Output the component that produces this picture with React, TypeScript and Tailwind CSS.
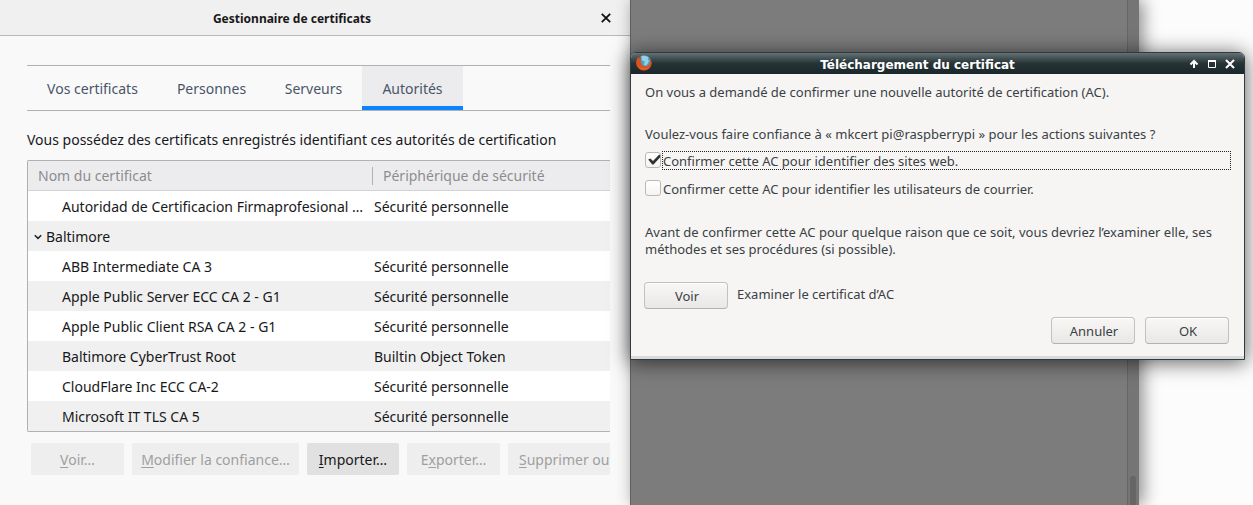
import { useState } from 'react';
import type { ReactNode } from 'react';

const tabs = [
  { label: 'Vos certificats', width: 'w-[131px]' },
  { label: 'Personnes', width: 'w-[107px]' },
  { label: 'Serveurs', width: 'w-[97px]' },
  { label: 'Autorités', width: 'w-[101px]' },
];

const certificates = [
  { name: 'Autoridad de Certificacion Firmaprofesional …', device: 'Sécurité personnelle' },
  { name: 'Baltimore', device: '', group: true },
  { name: 'ABB Intermediate CA 3', device: 'Sécurité personnelle' },
  { name: 'Apple Public Server ECC CA 2 - G1', device: 'Sécurité personnelle' },
  { name: 'Apple Public Client RSA CA 2 - G1', device: 'Sécurité personnelle' },
  { name: 'Baltimore CyberTrust Root', device: 'Builtin Object Token' },
  { name: 'CloudFlare Inc ECC CA-2', device: 'Sécurité personnelle' },
  { name: 'Microsoft IT TLS CA 5', device: 'Sécurité personnelle' },
];

function ActionButton({ className, disabled, children }: { className: string; disabled?: boolean; children: ReactNode }) {
  return (
    <button
      type="button"
      disabled={disabled}
      className={`h-8 shrink-0 whitespace-nowrap pt-0.5 ${disabled ? 'bg-[#eeeeee] text-[#9f9f9f]' : 'bg-[#e1e1e1] text-[#18181a]'} ${className}`}
    >
      {children}
    </button>
  );
}

function Key({ children }: { children: string }) {
  return <span className="underline decoration-1 underline-offset-2">{children}</span>;
}

function CertificateManager() {
  const [active, setActive] = useState('Autorités');
  return (
    <section className="flex w-[630px] shrink-0 flex-col bg-[#f9f9fa] text-sm text-[#18181a]">
      <header className="flex h-9 items-center border-b border-[#b9b9b9] bg-[#f0f0f0]">
        <h1 className="min-w-0 flex-1 pt-0.5 text-center text-xs font-bold">Gestionnaire de certificats</h1>
        <button type="button" aria-label="Fermer" className="flex w-[46px] justify-center">
          <svg width="10" height="10" viewBox="0 0 10 10" className="mr-0.5">
            <path d="M0.8 0.8L9.2 9.2M9.2 0.8L0.8 9.2" stroke="#111" strokeWidth="1.8" fill="none" />
          </svg>
        </button>
      </header>
      <div className="flex flex-col pl-[27px] pr-5 pt-[29px]">
        <nav className="flex h-[46px] border-y border-[#b1b1b3]">
          {tabs.map((tab) => (
            <button
              key={tab.label}
              type="button"
              onClick={() => setActive(tab.label)}
              className={`border-b-4 pt-1.5 text-[#4a5568] ${tab.width} ${active === tab.label ? 'border-[#0a84ff] bg-[#ececee]' : 'border-transparent'}`}
            >
              {tab.label}
            </button>
          ))}
        </nav>
        <p className="mt-[19px] whitespace-nowrap leading-5">
          Vous possédez des certificats enregistrés identifiant ces autorités de certification
        </p>
        <div className="mt-2.5 rounded-l-[2px] border-y border-l border-[#b1b1b3] bg-white">
          <table className="w-full table-fixed border-separate border-spacing-0">
            <thead>
              <tr className="h-[30px] bg-[#ececee] text-[#8c8c8e]">
                <th className="w-[344px] border-b border-[#d3d3d5] p-0 pl-2.5 text-left font-normal">Nom du certificat</th>
                <th className="border-b border-[#d3d3d5] p-0 text-left font-normal">
                  <span className="block border-l border-[#b1b1b3] pl-2.5 leading-[18px]">Périphérique de sécurité</span>
                </th>
              </tr>
            </thead>
            <tbody>
              {certificates.map((c) => (
                <tr key={c.name} className="h-[30px] even:bg-[#f0f0f0]">
                  <td className={`whitespace-nowrap p-0 pt-0.5 ${c.group ? 'pl-1.5' : 'pl-[34px]'}`}>
                    {c.group ? (
                      <span className="flex items-center gap-1">
                        <svg width="8" height="6" viewBox="0 0 8 6">
                          <path d="M0.8 1.2L4 4.4L7.2 1.2" stroke="#222" strokeWidth="1.5" fill="none" />
                        </svg>
                        {c.name}
                      </span>
                    ) : (
                      c.name
                    )}
                  </td>
                  <td className="p-0 pl-0.5 pt-0.5">{c.device}</td>
                </tr>
              ))}
            </tbody>
          </table>
        </div>
        <div className="mt-[11px] flex gap-2 pl-1">
          <ActionButton disabled className="w-[93px] rounded-[2px]"><Key>V</Key>oir…</ActionButton>
          <ActionButton disabled className="w-[167px] rounded-[2px]"><Key>M</Key>odifier la confiance…</ActionButton>
          <ActionButton className="w-[92px] rounded-[2px]"><Key>I</Key>mporter…</ActionButton>
          <ActionButton disabled className="w-[93px] rounded-[2px]">E<Key>x</Key>porter…</ActionButton>
          <ActionButton disabled className="w-[102px] rounded-l-[2px] pl-[11px] text-left"><Key>S</Key>upprimer ou</ActionButton>
        </div>
      </div>
    </section>
  );
}

function FirefoxLogo() {
  return (
    <svg width="16" height="16" viewBox="0 0 16 16" className="-mt-0.5">
      <circle cx="8" cy="8" r="7.6" fill="#c8431d" />
      <path d="M4.500 1.600C6.500 0 11 -.2 13.500 2.600C15 5 14.500 9 12.500 10.800C10.500 12.600 7.500 12 6 10.300L4.200 7L4.800 4.600Z" fill="#4f9dc0" />
      <path d="M5.500 1C8.200 .2 11 .8 12.500 2.600L11.600 4.200L13 5.800L11.800 8.600L9.800 10.800L7.600 9.200L9 6.800L6 5.600L5.600 3.400Z" fill="#8fd2e4" />
      <path d="M.4 6C.8 4 2 2.800 2.600 2.200L3.400 3.600L5 4.200L4.800 6L4.600 7.600L6.400 10.200C8.400 12 11 11.600 12.800 10C14.200 8.400 14.400 5.600 13.800 3.400C15.600 5.200 16 8.600 14.800 11.400C12 16.600 3.600 16.800 1 11.200C.2 9.400 .1 7.600 .4 6Z" fill="#d9531e" />
      <path d="M2.400 10.500C4.200 13.600 9 14.600 12.600 12.200C9.600 15.400 4.200 14.600 2.400 10.500Z" fill="#ee7540" />
    </svg>
  );
}

function TrustOption({ id, label, initial, outlined }: { id: string; label: string; initial: boolean; outlined?: boolean }) {
  const [checked, setChecked] = useState(initial);
  return (
    <div className="flex items-start gap-px">
      <span className="grid size-4 shrink-0 *:col-start-1 *:row-start-1">
        <input
          id={id}
          type="checkbox"
          checked={checked}
          onChange={() => setChecked(!checked)}
          className="mt-px size-4 appearance-none rounded-[3px] border border-[#bfb8b1] bg-linear-to-b from-white to-[#f5f4f3]"
        />
        {checked && (
          <svg width="16" height="16" viewBox="0 0 16 16" className="pointer-events-none mt-px">
            <path d="M3.200 7.400L5.400 6.600L8 9L14.200 2.600L15.200 3.400V5.200L8.600 12.400H7.200Z" fill="#2e3436" />
          </svg>
        )}
      </span>
      <label htmlFor={id} className={`flex-1 border pt-px leading-4 ${outlined ? 'border-dotted border-[#222]' : 'border-transparent'}`}>
        {label}
      </label>
    </div>
  );
}

function DialogButton({ children }: { children: string }) {
  return (
    <button
      type="button"
      className="h-[27px] w-[84px] rounded-[4px] border border-[#c5c1ba] border-b-[#b5b0a8] bg-linear-to-b from-[#f8f7f6] to-[#e9e8e7] pl-0.5 pt-0.5 shadow-[inset_0_1px_0_#fff]"
    >
      {children}
    </button>
  );
}

function ConfirmDialog() {
  return (
    <section
      role="dialog"
      aria-labelledby="dialog-title"
      className="absolute left-[630px] top-[52px] w-[615px] rounded-t-md border border-[#2e3c3f] bg-[#f6f5f4] text-[13px] text-[#3a4144] shadow-[0_2px_20px_1px_rgba(0,0,0,0.6)]"
    >
      <header className="flex h-[21px] items-center rounded-t-[5px] bg-linear-to-b from-[#657174] via-[#263437] to-[#1b272a] pl-[5px] pr-[9px] text-white">
        <FirefoxLogo />
        <h2 id="dialog-title" className="flex-1 pr-1.5 pt-0.5 text-center font-['DejaVu_Sans',sans-serif] text-xs font-bold">
          Téléchargement du certificat
        </h2>
        <div className="flex items-center gap-2">
          <button type="button" aria-label="Enrouler">
            <svg width="10" height="10" viewBox="0 0 10 10" className="block">
              <path d="M5 9V3M1.500 5.500L5 2L8.500 5.500" stroke="#fff" strokeWidth="2" fill="none" />
            </svg>
          </button>
          <button type="button" aria-label="Agrandir">
            <svg width="10" height="10" viewBox="0 0 10 10" className="block">
              <path d="M1.500 1.500H8.500V8.500H1.500Z" stroke="#fff" strokeWidth="1" fill="none" />
              <path d="M1 2H9" stroke="#fff" strokeWidth="2" />
            </svg>
          </button>
          <button type="button" aria-label="Fermer">
            <svg width="10" height="10" viewBox="0 0 10 10" className="block">
              <path d="M1 1L9 9M9 1L1 9" stroke="#fff" strokeWidth="2" fill="none" />
            </svg>
          </button>
        </div>
      </header>
      <div className="flex flex-col border-b-[3px] border-[#d8dadb] pb-3 pl-[13px] pr-[13px] pt-2.5 leading-[17px]">
        <div className="pl-px">
          <p>On vous a demandé de confirmer une nouvelle autorité de certification (AC).</p>
          <p className="mt-[25px]">Voulez-vous faire confiance à « mkcert pi@raspberrypi » pour les actions suivantes ?</p>
          <div className="mt-2 flex flex-col gap-[9px]">
            <TrustOption id="trust-web" label="Confirmer cette AC pour identifier des sites web." initial outlined />
            <TrustOption id="trust-mail" label="Confirmer cette AC pour identifier les utilisateurs de courrier." initial={false} />
          </div>
          <p className="mt-[26px]">
            Avant de confirmer cette AC pour quelque raison que ce soit, vous devriez l’examiner elle, ses méthodes et ses procédures (si possible).
          </p>
        </div>
        <div className="mt-6 flex items-center gap-[9px]">
          <DialogButton>Voir</DialogButton>
          <span className="pb-0.5">Examiner le certificat d’AC</span>
        </div>
        <div className="mt-2 flex justify-end gap-2.5 pr-0.5">
          <DialogButton>Annuler</DialogButton>
          <DialogButton>OK</DialogButton>
        </div>
      </div>
    </section>
  );
}

export default function App() {
  return (
    <main className="relative flex min-h-screen overflow-hidden bg-[#fcfcfc] font-['Noto_Sans',sans-serif]">
      <CertificateManager />
      <div className="flex w-[509px] shrink-0 items-stretch justify-end border-l border-[#5f5f5f] bg-[#7c7c7c] shadow-[4px_0_16px_rgba(0,0,0,0.45)]">
        <div className="flex w-3 flex-col justify-end border-l border-[#666] bg-[#757575] pl-0.5">
          <div className="h-[29px] w-1.5 rounded-t-full bg-[#666]" />
        </div>
      </div>
      <ConfirmDialog />
    </main>
  );
}
